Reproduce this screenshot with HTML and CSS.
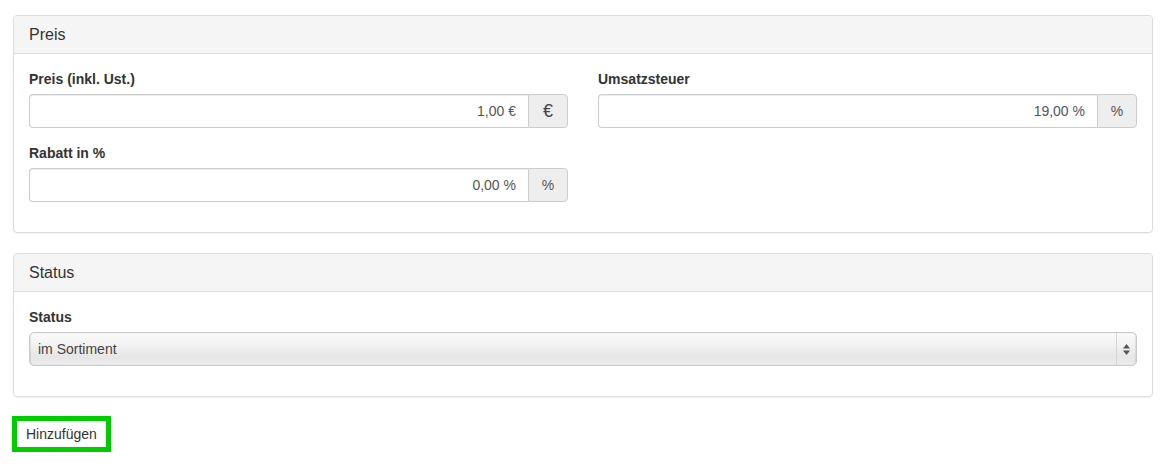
FILE: index.html
```
<!doctype html>
<html lang="de">
<head>
	<meta charset="UTF-8" />
	<title>Artikel hinzufügen</title>
	<link rel="stylesheet" href="styles.css">
</head>
<body>

<div class="container">

	<div class="panel">
		<div class="panel-heading">Preis</div>
		<div class="panel-body">
			<div class="row">
				<div class="form-group">
					<label>Preis (inkl. Ust.)</label>
					<div class="input-group">
						<input class="form-control" type="text" value="1,00 €">
						<span class="addon addon-euro">€</span>
					</div>
				</div>
				<div class="form-group">
					<label>Umsatzsteuer</label>
					<div class="input-group">
						<input class="form-control" type="text" value="19,00 %">
						<span class="addon">%</span>
					</div>
				</div>
				<div class="form-group">
					<label>Rabatt in %</label>
					<div class="input-group">
						<input class="form-control" type="text" value="0,00 %">
						<span class="addon">%</span>
					</div>
				</div>
			</div>
		</div>
	</div>

	<div class="panel">
		<div class="panel-heading">Status</div>
		<div class="panel-body">
			<div class="form-group">
				<label>Status</label>
				<div class="select">
					<span class="select-text">im Sortiment</span>
					<span class="select-arrows">
						<svg width="7" height="11" viewBox="0 0 7 11">
							<path d="M3.5 0 L7 4.5 L0 4.5 Z" fill="#555"/>
							<path d="M3.5 11 L7 6.5 L0 6.5 Z" fill="#555"/>
						</svg>
					</span>
				</div>
			</div>
		</div>
	</div>

	<button class="btn-add" type="button">Hinzufügen</button>

</div>

</body>
</html>
```

FILE: styles.css
```
body{
	margin: 0;
	padding: 0;
	font-size: 14px;
	font-family: "Liberation Sans", Arial, sans-serif;
	color: #333;
	background: #fff;
}
.container{
	padding: 15px 15px 0 13px;
}
.panel{
	border: 1px solid #ddd;
	border-radius: 4px;
	margin-bottom: 20px;
	box-shadow: 0 1px 1px rgba(0, 0, 0, 0.05);
}
.panel-heading{
	background: #f5f5f5;
	border-bottom: 1px solid #ddd;
	border-radius: 3px 3px 0 0;
	padding: 10px 15px;
	font-size: 16px;
	line-height: 17px;
}
.panel-body{
	padding: 15px;
}
.row{
	display: grid;
	grid-template-columns: 1fr 1fr;
	column-gap: 30px;
}
.form-group{
	margin-bottom: 15px;
}
label{
	display: block;
	font-size: 14px;
	font-weight: bold;
	line-height: 20px;
	margin-bottom: 5px;
}
.input-group{
	display: flex;
	height: 34px;
}
.form-control{
	flex: 1;
	min-width: 0;
	box-sizing: border-box;
	height: 34px;
	margin: 0;
	padding: 6px 12px;
	border: 1px solid #ccc;
	border-right: 0;
	border-radius: 4px 0 0 4px;
	font-family: inherit;
	font-size: 14px;
	color: #555;
	text-align: right;
	box-shadow: inset 0 1px 1px rgba(0, 0, 0, 0.075);
	outline: none;
}
.addon{
	display: flex;
	align-items: center;
	justify-content: center;
	box-sizing: border-box;
	width: 40px;
	background: #eee;
	border: 1px solid #ccc;
	border-radius: 0 4px 4px 0;
	color: #555;
	font-size: 14px;
}
.addon-euro{
	font-size: 18px;
	color: #444;
}
.select{
	display: flex;
	box-sizing: border-box;
	height: 34px;
	border: 1px solid #c9c9c9;
	border-radius: 5px;
	background: linear-gradient(#fbfbfb, #f1f1f1 40%, #e6e6e6 75%, #ececec);
	box-shadow: inset 1px 0 1px rgba(0, 0, 0, 0.08), inset -1px 0 1px rgba(0, 0, 0, 0.08);
}
.select-text{
	flex: 1;
	padding-left: 8px;
	line-height: 32px;
	font-size: 14px;
	color: #444;
}
.select-arrows{
	display: flex;
	align-items: center;
	justify-content: center;
	width: 19px;
	border-left: 1px solid #d4d4d4;
}
.btn-add{
	display: block;
	margin: -1px 0 0 -1px;
	padding: 0 9px;
	height: 36px;
	border: 5px solid #0c0;
	background: #fff;
	font-family: inherit;
	font-size: 14px;
	color: #333;
}
```
